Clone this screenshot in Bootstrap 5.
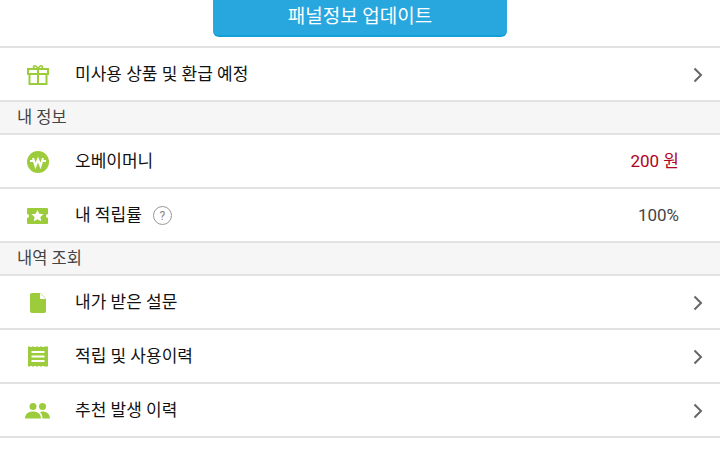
<!DOCTYPE html>
<html lang="ko">
<head>
  <meta charset="UTF-8">
  <meta name="viewport" content="width=device-width, initial-scale=1.0">
  <title>내 정보</title>
  <link href="https://cdn.jsdelivr.net/npm/bootstrap@5.3.3/dist/css/bootstrap.min.css" rel="stylesheet" crossorigin="anonymous">
  <style>
    body {
      font-family: Roboto, "Noto Sans CJK KR", sans-serif;
      background: #fff;
      color: #111;
      overflow: hidden;
    }
    .top-area {
      height: 46px;
    }
    .update-btn {
      width: 294px;
      height: 37px;
      padding: 0 0 2px;
      background: #28a7df;
      color: #fff;
      font-size: 19px;
      line-height: 1;
      border: 0;
      border-bottom: 2px solid #12a0d8;
      border-radius: 0 0 6px 6px;
    }
    .menu-row {
      height: 54px;
      padding: 1px 41px 0 0;
      border-top: 2px solid #e2e2e2;
      font-size: 17px;
      line-height: 1;
    }
    .menu-link {
      padding-right: 17px;
    }
    .menu-last {
      height: 56px;
      border-bottom: 2px solid #e2e2e2;
    }
    .icon-cell {
      width: 75px;
      flex-shrink: 0;
    }
    .menu-head {
      height: 33px;
      padding: 2px 0 0 17px;
      background: #f6f6f6;
      border-top: 2px solid #e2e2e2;
      color: #444;
      font-size: 16.500px;
    }
    .val-red {
      color: #b10021;
    }
    .val-grey {
      color: #444;
    }
    .help-mark {
      width: 19px;
      height: 19px;
      border: 1px solid #999;
      border-radius: 50%;
      color: #888;
      font-size: 12px;
      margin-left: 11px;
    }
  </style>
</head>
<body>
  <!-- Update button -->
  <div class="top-area d-flex justify-content-center align-items-start">
    <button type="button" class="btn update-btn">패널정보 업데이트</button>
  </div>

  <div class="menu-row menu-link d-flex align-items-center">
    <div class="icon-cell d-flex justify-content-center">
      <svg width="22" height="21" viewBox="0 0 22 21" fill="none" stroke="#9ccb3b" stroke-width="2"><rect x="1" y="5" width="20" height="5"/><path d="M2.500 10v10h17V10M11 5v15"/><path d="M11 5C8.500 5 6.500 4.500 6.500 3S9 .5 11 5C13 .5 15.500 1.500 15.500 3S13.500 5 11 5Z" stroke-width="1.600"/></svg>
    </div>
    <span class="flex-grow-1">미사용 상품 및 환급 예정</span>
    <svg width="10" height="16" viewBox="0 0 10 16" fill="none" stroke="#666" stroke-width="2"><path d="M1.500 1.500 8 8l-6.500 6.500"/></svg>
  </div>

  <div class="menu-head d-flex align-items-center">내 정보</div>

  <div class="menu-row d-flex align-items-center">
    <div class="icon-cell d-flex justify-content-center">
      <svg width="22" height="22" viewBox="0 0 22 22"><circle cx="11" cy="11" r="11" fill="#9ccb3b"/><path d="M3 10h3.500M15.500 10H19M6 7l2.500 8L11 8.500l2.500 6.500L16 7" fill="none" stroke="#fff" stroke-width="2.200"/></svg>
    </div>
    <span class="flex-grow-1">오베이머니</span>
    <span class="val-red">200 원</span>
  </div>

  <div class="menu-row d-flex align-items-center">
    <div class="icon-cell d-flex justify-content-center">
      <svg width="21" height="16" viewBox="0 0 21 16"><path d="M1 0h19a1 1 0 0 1 1 1v5a2 2 0 0 0 0 4v5a1 1 0 0 1-1 1H1a1 1 0 0 1-1-1v-5a2 2 0 0 0 0-4V1a1 1 0 0 1 1-1Z" fill="#9ccb3b"/><path d="m10.500 2 1.800 3.800 4.200.5-3.100 2.800.8 4.100-3.700-2-3.700 2 .8-4.100-3.100-2.800 4.200-.5Z" fill="#fff"/></svg>
    </div>
    <span>내 적립률</span>
    <span class="help-mark d-inline-flex align-items-center justify-content-center">?</span>
    <span class="val-grey ms-auto">100%</span>
  </div>

  <div class="menu-head d-flex align-items-center">내역 조회</div>

  <div class="menu-row menu-link d-flex align-items-center">
    <div class="icon-cell d-flex justify-content-center">
      <svg width="16" height="20" viewBox="0 0 16 20"><path d="M2 0h8.500L16 5.500V18a2 2 0 0 1-2 2H2a2 2 0 0 1-2-2V2a2 2 0 0 1 2-2Z" fill="#9ccb3b"/><path d="M10 0v6h6Z" fill="#fff"/></svg>
    </div>
    <span class="flex-grow-1">내가 받은 설문</span>
    <svg width="10" height="16" viewBox="0 0 10 16" fill="none" stroke="#666" stroke-width="2"><path d="M1.500 1.500 8 8l-6.500 6.500"/></svg>
  </div>

  <div class="menu-row menu-link d-flex align-items-center">
    <div class="icon-cell d-flex justify-content-center">
      <svg width="20" height="21" viewBox="0 0 20 21"><rect y="0.500" width="20" height="20" fill="#9ccb3b"/><path d="M2 0h2v1H2zM6 0h2v1H6zM10 0h2v1h-2zM14 0h2v1h-2zM2 20h2v1H2zM6 20h2v1H6zM10 20h2v1h-2zM14 20h2v1h-2z" fill="#fff"/><path d="M3.500 5h13v2h-13zM3.500 9.500h13v2h-13zM3.500 14h13v2h-13z" fill="#fff"/></svg>
    </div>
    <span class="flex-grow-1">적립 및 사용이력</span>
    <svg width="10" height="16" viewBox="0 0 10 16" fill="none" stroke="#666" stroke-width="2"><path d="M1.500 1.500 8 8l-6.500 6.500"/></svg>
  </div>

  <div class="menu-row menu-link menu-last d-flex align-items-center">
    <div class="icon-cell d-flex justify-content-center">
      <svg width="25" height="16" viewBox="0 0 25 16" fill="#9ccb3b"><circle cx="8" cy="3.500" r="3.500"/><circle cx="17.500" cy="3.500" r="3.500"/><path d="M0 15.500C0 11 3.500 8.500 8 8.500s8 2.500 8 7ZM17.500 15.500c0-2.700-.8-4.800-2.400-6.300.7-.4 1.500-.7 2.400-.7 4 0 7.500 2.500 7.500 7Z"/></svg>
    </div>
    <span class="flex-grow-1">추천 발생 이력</span>
    <svg width="10" height="16" viewBox="0 0 10 16" fill="none" stroke="#666" stroke-width="2"><path d="M1.500 1.500 8 8l-6.500 6.500"/></svg>
  </div>

  <script src="https://cdn.jsdelivr.net/npm/bootstrap@5.3.3/dist/js/bootstrap.bundle.min.js" crossorigin="anonymous"></script>
</body>
</html>
